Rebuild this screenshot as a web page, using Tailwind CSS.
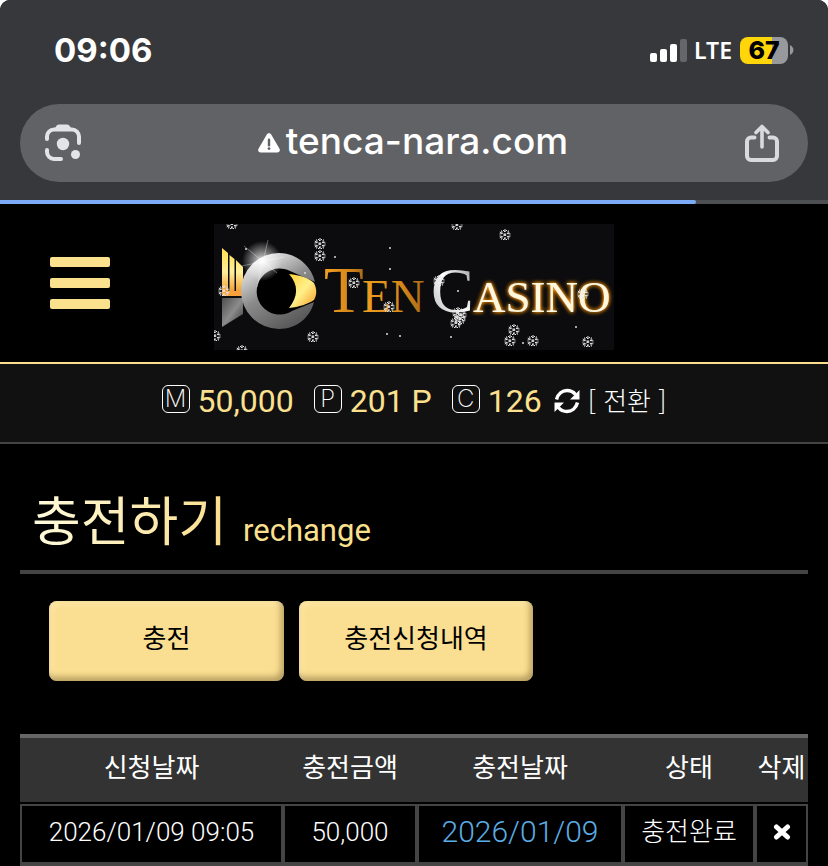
<!DOCTYPE html>
<html lang="ko">
<head>
<meta charset="utf-8">
<meta name="viewport" content="width=device-width, initial-scale=1">
<title>TEN CASINO</title>
<script src="https://cdn.jsdelivr.net/npm/@tailwindcss/browser@4"></script>
</head>
<body class="bg-white font-[Roboto,'Noto_Sans_CJK_KR',sans-serif]">
<div class="min-h-screen overflow-hidden rounded-t-[10px] bg-black text-white">

  <!-- Browser chrome -->
  <div class="bg-[#37383b] font-[Inter,sans-serif]">
    <div class="flex h-[104px] items-center justify-between pb-1 pl-[54px] pr-[34px]">
      <time class="text-[33px] font-bold leading-10">09:06</time>
      <div class="flex items-center">
        <svg class="mr-[7px] h-6 w-[37px]" viewBox="0 0 37 24" fill="#fff" aria-hidden="true">
          <rect x="0" y="15" width="7" height="9" rx="2"/><rect x="10" y="11" width="7" height="13" rx="2"/><rect x="20" y="6" width="7" height="18" rx="2"/><rect x="30" y="1" width="7" height="23" rx="2" fill="#65666a"/>
        </svg>
        <span class="mr-2 font-['Noto_Sans',sans-serif] text-[23px] font-semibold leading-8">LTE</span>
        <span class="flex h-[27px] w-12 items-center justify-center rounded-lg bg-linear-to-r from-[#ffd60a] from-67% to-[#98999d] to-67% text-[25px] font-extrabold leading-7 text-black">67</span>
        <svg class="ml-0.5 h-[10px] w-1" viewBox="0 0 4 10" aria-hidden="true"><path d="M0 0c4.500 2 4.500 8 0 10z" fill="#98999d"/></svg>
      </div>
    </div>
    <div class="px-5 pb-[18px]">
      <div class="flex h-[78px] items-center justify-between rounded-full bg-[#616265] pl-6 pr-7">
        <button type="button" aria-label="Lens">
          <svg class="h-[38px] w-[38px]" viewBox="0 0 38 38" fill="none" stroke="#e3e4e9" stroke-width="4" stroke-linecap="round">
            <path d="M3 15v-2.500a7 7 0 0 1 7-7h18a7 7 0 0 1 7 7V19M3 26v2a7 7 0 0 0 7 7h7"/>
            <path d="M9 7l3-4.500c.8-1.200 1.500-2 3-2h8c1.500 0 2.200.8 3 2L29 7z" fill="#e3e4e9" stroke="none"/>
            <circle cx="19" cy="20" r="6.200" fill="#e3e4e9" stroke="none"/><circle cx="31.500" cy="30.500" r="4.500" fill="#e3e4e9" stroke="none"/>
          </svg>
        </button>
        <div class="flex items-center gap-[6px] pb-1">
          <svg class="mt-1 h-5 w-[22px]" viewBox="0 0 22 20" aria-hidden="true"><path d="M8.800 1.500c1-1.800 3.400-1.800 4.400 0l8.300 14.200c1 1.800-.2 3.800-2.200 3.800H2.700c-2 0-3.200-2-2.200-3.800z" fill="#fff"/><path d="M11 6.800v5.500" stroke="#616265" stroke-width="2.400" stroke-linecap="round"/><circle cx="11" cy="15.600" r="1.400" fill="#616265"/></svg>
          <span class="text-[37px] font-medium leading-10">tenca-nara.com</span>
        </div>
        <button type="button" aria-label="Share">
          <svg class="h-[38px] w-[36px]" viewBox="0 0 36 38" fill="none" stroke="#d9dade" stroke-width="4" stroke-linecap="round" stroke-linejoin="round">
            <path d="M10.500 13.500H7a4 4 0 0 0-4 4V32a4 4 0 0 0 4 4h22a4 4 0 0 0 4-4V17.500a4 4 0 0 0-4-4h-3.500"/><path d="M18 23V3M12 8.500L18 2.500l6 6" stroke-width="3.600"/>
          </svg>
        </button>
      </div>
    </div>
    <div class="h-1 bg-[#4e4f53]"><div class="h-1 rounded-r-full bg-[#7baaf7]" style="width:84%"></div></div>
  </div>

  <!-- Site header -->
  <header class="grid grid-cols-[1fr_400px_1fr] items-center border-b-2 border-[#fade8d] pb-3 pt-5">
    <button type="button" aria-label="메뉴" class="mb-2 ml-[50px] flex w-[60px] flex-col gap-[11px]">
      <span class="h-[10px] rounded-xs bg-[#fbe08e]"></span><span class="h-[10px] rounded-xs bg-[#fbe08e]"></span><span class="h-[10px] rounded-xs bg-[#fbe08e]"></span>
    </button>
    <a href="#" aria-label="Ten Casino">
      <svg class="block h-[126px] w-[400px]" viewBox="0 0 400 126">
        <defs>
          <linearGradient id="gold" x1="0" y1="0" x2="0" y2="1"><stop offset="0" stop-color="#ffe04a"/><stop offset=".5" stop-color="#fff09a"/><stop offset="1" stop-color="#f08c1c"/></linearGradient>
          <linearGradient id="eye" x1="0" y1="0" x2="1" y2="1"><stop offset="0" stop-color="#ffd23c"/><stop offset=".5" stop-color="#fff08a"/><stop offset="1" stop-color="#f59a24"/></linearGradient>
          <linearGradient id="ring" x1="0" y1="0" x2=".6" y2="1"><stop offset="0" stop-color="#fff"/><stop offset=".3" stop-color="#c9c9c9"/><stop offset=".55" stop-color="#8b8b8b"/><stop offset="1" stop-color="#5a5a5a"/></linearGradient>
          <linearGradient id="tail" x1="0" y1="0" x2="1" y2="1"><stop offset="0" stop-color="#4d4d4d"/><stop offset=".5" stop-color="#8c8c8c"/><stop offset="1" stop-color="#333"/></linearGradient>
          <linearGradient id="ten" x1="0" y1="0" x2="1" y2="0"><stop offset="0" stop-color="#f0a020"/><stop offset=".6" stop-color="#d9891a"/><stop offset="1" stop-color="#a86a18"/></linearGradient>
          <linearGradient id="silver" x1="1" y1="0" x2="0" y2="1"><stop offset="0" stop-color="#888"/><stop offset=".5" stop-color="#fff"/><stop offset="1" stop-color="#aaa"/></linearGradient>
          <radialGradient id="flare"><stop offset="0" stop-color="#fff"/><stop offset=".3" stop-color="#fff" stop-opacity=".6"/><stop offset="1" stop-color="#fff" stop-opacity="0"/></radialGradient>
          <filter id="glow" x="-10%" y="-30%" width="120%" height="160%"><feGaussianBlur in="SourceAlpha" stdDeviation="2"/><feComponentTransfer result="a"><feFuncA type="linear" slope="1.800"/></feComponentTransfer><feFlood flood-color="#e68a08"/><feComposite in2="a" operator="in" result="g"/><feMerge><feMergeNode in="g"/><feMergeNode in="SourceGraphic"/></feMerge></filter>
          <g id="flake" stroke="#e8e8e8" stroke-width="1" fill="none">
            <path d="M0-6V6M-5.200-3L5.200 3M-5.200 3L5.200-3M-2-5l2 2 2-2M-2 5l2-2 2 2M-5.500-1l3-.5-1-3M5.500 1l-3 .5 1 3M-5.500 1l3 .5-1 3M5.500-1l-3-.5 1-3" stroke-dasharray="3 1"/>
          </g>
        </defs>
        <rect width="400" height="126" fill="#0c0b0d"/>
        <path d="M8 24l6 5v43H8zM15.500 31l5 4v37h-5zM22 36l7 7v29h-7z" fill="url(#gold)"/>
        <path d="M8 67h21v5H8z" fill="#f7a13c"/>
        <path d="M8 74h21v16L8 103z" fill="url(#tail)"/>
        <circle cx="66" cy="67" r="36" fill="#000"/>
        <path d="M65 29a38 38 0 1 0 0 76c17 0 31-11 35-27L78 87A23 23 0 1 1 76 47l25 11C97 41 82 29 65 29z" fill="url(#ring)"/>
        <path d="M75 50c11 1 20 4 25 9 3 6 3 12 0 17-6 4-15 7-25 8 9-11 10-23 0-34z" fill="url(#eye)"/>
        <circle cx="48" cy="37" r="20" fill="url(#flare)"/>
        <path d="M30 22L63 49M54 16L43 63M28 42l42-9" stroke="#fff" stroke-opacity=".35" stroke-width="1"/>
        <g font-family="'Liberation Serif', serif">
          <text x="110" y="88" font-size="65" fill="url(#ten)">T</text>
          <text x="148" y="88" font-size="47" fill="url(#ten)">EN</text>
          <text x="217" y="88" font-size="64" fill="url(#silver)">C</text>
          <text x="259" y="88" font-size="45" fill="#fff8dc" filter="url(#glow)">ASINO</text>
        </g>
        <use href="#flake" x="106" y="20"/><use href="#flake" x="106" y="32"/><use href="#flake" x="140" y="59"/><use href="#flake" x="175" y="83"/>
        <use href="#flake" x="10" y="67"/><use href="#flake" x="99" y="113"/><use href="#flake" x="18" y="0"/><use href="#flake" x="1" y="112"/><use href="#flake" x="28" y="127"/>
        <use href="#flake" x="243" y="1"/><use href="#flake" x="291" y="11"/><use href="#flake" x="225" y="57"/><use href="#flake" x="244" y="89"/><use href="#flake" x="246" y="95"/><use href="#flake" x="242" y="99"/><use href="#flake" x="247" y="91"/>
        <use href="#flake" x="300" y="106"/><use href="#flake" x="296" y="117"/><use href="#flake" x="319" y="117"/><use href="#flake" x="374" y="118"/><use href="#flake" x="369" y="70"/>
        <g fill="#ddd"><circle cx="32" cy="25" r="1"/><circle cx="121" cy="33" r="1"/><circle cx="91" cy="49" r="1"/><circle cx="176" cy="24" r="1"/><circle cx="176" cy="45" r="1"/><circle cx="173" cy="110" r="1"/><circle cx="186" cy="112" r="1"/><circle cx="237" cy="113" r="1"/><circle cx="309" cy="119" r="1"/><circle cx="362" cy="103" r="1"/><circle cx="244" cy="67" r="1"/></g>
      </svg>
    </a>
  </header>

  <!-- Balances -->
  <div class="flex h-20 items-center justify-center gap-5 whitespace-nowrap border-b-2 border-[#444] bg-[#111112] pb-1 text-[32px] leading-10 text-[#fbe08e]">
    <div class="flex items-center gap-2"><span class="mb-1 flex size-7 items-center justify-center rounded-md border border-white font-[Inter,sans-serif] text-2xl font-extralight leading-6 text-white">M</span><span>50,000</span></div>
    <div class="flex items-center gap-2"><span class="mb-1 flex size-7 items-center justify-center rounded-md border border-white font-[Inter,sans-serif] text-2xl font-extralight leading-6 text-white">P</span><span>201 P</span></div>
    <div class="flex items-center gap-2"><span class="mb-1 flex size-7 items-center justify-center rounded-md border border-white font-[Inter,sans-serif] text-2xl font-extralight leading-6 text-white">C</span><span>126</span>
      <button type="button" class="ml-1 flex items-center gap-2 text-[26px] font-light leading-8 text-white">
        <svg class="h-[26px] w-[26px]" viewBox="0 0 26 26" fill="none" stroke="#fff" stroke-width="3.500" aria-hidden="true"><path d="M2.500 11.500C4 5.500 8.500 2.500 13 2.500c3.500 0 6.500 1.500 8.500 4M23.500 14.500C22 20.500 17.500 23.500 13 23.500c-3.500 0-6.500-1.500-8.500-4"/><path d="M25.500 2v9.500H16zM.5 24v-9.500H10z" fill="#fff" stroke="none"/></svg>
        <span class="pb-0.5 font-['Noto_Sans_CJK_KR',sans-serif]">[ 전환 ]</span>
      </button>
    </div>
  </div>

  <main class="px-5 pt-[39px]">
    <h1 class="flex h-[91px] items-baseline gap-4 border-b-4 border-[#444] pl-3">
      <span class="bg-linear-to-r from-[#fffbdc] to-[#fade8d] bg-clip-text text-[53px] font-normal leading-[80px] text-transparent">충전하기</span>
      <span class="text-[31px] font-normal leading-10 text-[#fbe08e]">rechange</span>
    </h1>

    <div class="flex gap-[15px] pl-[29px] pt-[27px]">
      <button type="button" class="h-20 w-[235px] rounded-lg bg-[#fadf92] pb-1 text-[26px] leading-10 text-black shadow-[inset_-3px_-4px_6px_rgba(80,60,20,0.4),inset_3px_3px_6px_rgba(255,235,180,0.7)]">충전</button>
      <button type="button" class="h-20 w-[234px] rounded-lg bg-[#fadf92] pb-1 text-[26px] leading-10 text-black shadow-[inset_-3px_-4px_6px_rgba(80,60,20,0.4),inset_3px_3px_6px_rgba(255,235,180,0.7)]">충전신청내역</button>
    </div>

    <table class="mt-[53px] w-full table-fixed border-separate border-spacing-0 whitespace-nowrap text-center text-[26px] leading-8">
      <colgroup><col><col class="w-[134px]"><col class="w-[206px]"><col class="w-[132px]"><col class="w-[53px]"></colgroup>
      <thead>
        <tr class="h-[70px] *:border-t-4 *:border-b-2 *:border-t-[#666] *:border-b-black *:bg-[#333] *:p-0 *:pb-1 *:font-normal">
          <th scope="col">신청날짜</th><th scope="col">충전금액</th><th scope="col">충전날짜</th><th scope="col">상태</th><th scope="col">삭제</th>
        </tr>
      </thead>
      <tbody>
        <tr class="h-[60px] font-light *:border-2 *:border-[#444] *:p-0 *:pb-1">
          <td>2026/01/09 09:05</td><td>50,000</td><td class="text-[30px] text-[#5bade4]">2026/01/09</td><td>충전완료</td>
          <td><button type="button" aria-label="삭제" class="mx-auto block"><svg class="h-4 w-[18px]" viewBox="0 0 18 16" stroke="#fff" stroke-width="5" stroke-linecap="round"><path d="M3.500 3l11 10M14.500 3l-11 10"/></svg></button></td>
        </tr>
      </tbody>
    </table>
    <div class="h-0.5 bg-[#444]"></div>
  </main>
</div>
</body>
</html>
